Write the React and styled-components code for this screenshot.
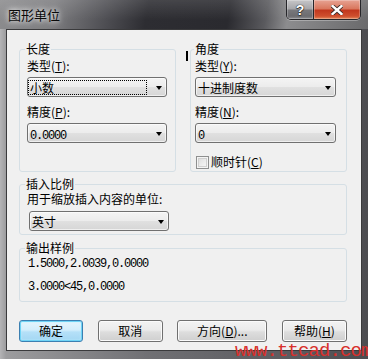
import React from "react";
import styled, { createGlobalStyle } from "styled-components";

const UI = `"Noto Sans CJK SC", "Noto Sans", sans-serif`;
const MONO = `"Liberation Mono", "DejaVu Sans Mono", monospace`;

const GlobalStyle = createGlobalStyle`
  html, body { margin: 0; padding: 0; background: #5a5a5c; }
  body { font-family: ${UI}; }
  *, *::before, *::after { box-sizing: border-box; }
`;

const Window = styled.div`
  position: relative;
  width: 368px;
  height: 359px;
  overflow: hidden;
  display: flex;
  flex-direction: column;
  background: linear-gradient(90deg, #b4b4b6 0px, #9c9c9e 6px, #707074 40%, #58585c 85%, #4c4c50 100%);
  font-family: ${UI};
  font-size: 12px;
  color: #000;
`;

const TitleBar = styled.div`
  height: 29px;
  flex-shrink: 0;
  display: flex;
  align-items: flex-start;
  padding: 0 7px 0 8px;
  background:
    linear-gradient(180deg, rgba(255, 255, 255, 0.12) 0%, rgba(255, 255, 255, 0) 70%),
    linear-gradient(100deg, #8c8c8e 0%, #7c7c7f 15%, #4c4c51 30%, #2d2d32 40%, #2a2a2f 62%, #5a5a5e 72%, #8c8c8e 78%, #6a6a6c 100%);
`;

const Title = styled.div`
  margin-top: 7px;
  font-size: 13px;
  line-height: 15px;
  color: #0a0a0a;
  text-shadow: 0 0 5px rgba(255, 255, 255, 0.95), 0 0 10px rgba(255, 255, 255, 0.7);
`;

const CaptionGroup = styled.div`
  margin-left: auto;
  display: flex;
  height: 20px;
  border: 1px solid #26262a;
  border-top: none;
  border-radius: 0 0 5px 5px;
  overflow: hidden;
  box-shadow: 0 1px 0 rgba(255, 255, 255, 0.3);
`;

const CapButton = styled.div`
  width: ${(p) => p.$w}px;
  display: flex;
  align-items: center;
  justify-content: center;
  border-left: ${(p) => (p.$sep ? "1px solid #26262a" : "none")};
  box-shadow: inset 0 0 0 1px rgba(255, 255, 255, 0.25);
  background: ${(p) =>
    p.$close
      ? "linear-gradient(180deg, #e7a393 0%, #d9785f 45%, #c2381e 55%, #cf4f2e 85%, #e58a5c 100%)"
      : "linear-gradient(180deg, #c6c6c8 0%, #a7a7aa 45%, #77777b 55%, #6c6c70 85%, #8e8e92 100%)"};
`;

const HelpGlyph = styled.span`
  font-family: "Liberation Sans", sans-serif;
  font-weight: bold;
  font-size: 14px;
  line-height: 14px;
  color: #fff;
  text-shadow: 0 0 1px #222, 0 0 1px #222, 0 1px 1px #333;
`;

const Client = styled.div`
  flex: 1;
  margin: 0 6px 8px 6px;
  border: 1px solid #3a3a3c;
  background: #f0f0f0;
  padding: 12px 14px 0 12px;
  display: flex;
  flex-direction: column;
`;

const TopRow = styled.div`
  display: flex;
  align-items: stretch;
`;

const Caret = styled.div`
  flex-shrink: 0;
  align-self: flex-start;
  width: 2px;
  height: 10px;
  margin: 9px 2px 0 10px;
  background: #000;
`;

const Group = styled.fieldset`
  margin: ${(p) => p.$mt || 0}px 0 0 0;
  padding: 0;
  min-width: 0;
  flex: ${(p) => (p.$flex ? 1 : "none")};
  border: 1px solid #d5dfe5;
  border-radius: 3px;
`;

const Legend = styled.legend`
  padding: 0 1px;
  margin-left: ${(p) => p.$x ?? 5}px;
  font-size: 12px;
  line-height: 14px;
`;

const Body = styled.div`
  padding: ${(p) => p.$pad};
  display: flex;
  flex-direction: column;
`;

const Label = styled.div`
  margin-top: ${(p) => p.$mt || 0}px;
  line-height: 14px;
  white-space: nowrap;
`;

const Key = styled.u`
  text-decoration: underline;
  text-underline-offset: 1px;
`;

const Select = styled.div`
  margin-top: ${(p) => p.$mt || 0}px;
  margin-left: ${(p) => p.$ml || 0}px;
  width: ${(p) => (p.$w ? `${p.$w}px` : "auto")};
  height: 20px;
  display: flex;
  align-items: center;
  border: 1px solid #707070;
  border-radius: 3px;
  background: linear-gradient(180deg, #f4f4f4 0%, #ececec 48%, #e0e0e0 52%, #d6d6d6 100%);
  box-shadow: inset 0 0 0 1px rgba(255, 255, 255, 0.6);
`;

const Value = styled.div`
  flex: 1;
  height: 15px;
  line-height: 15px;
  padding-left: 2px;
  outline: ${(p) => (p.$focus ? "1px dotted #000" : "none")};
  outline-offset: -1px;
  white-space: nowrap;
`;

const Arrow = styled.div`
  flex-shrink: 0;
  width: 0;
  height: 0;
  margin: 1px 4px 0 9px;
  border-left: 3.5px solid transparent;
  border-right: 3.5px solid transparent;
  border-top: 4px solid #000;
`;

const Num = styled.span`
  font-family: ${MONO};
  font-size: 12px;
  letter-spacing: -1.2px;
`;

const CheckRow = styled.div`
  margin-top: ${(p) => p.$mt || 0}px;
  display: flex;
  align-items: center;
  line-height: 14px;
  gap: 2px;
`;

const CheckBox = styled.div`
  width: 13px;
  height: 13px;
  margin-left: 1px;
  border: 1px solid #8e8f8f;
  background: linear-gradient(135deg, #d8d8d8 0%, #eeeeee 60%, #f8f8f8 100%);
  box-shadow: inset 0 0 0 1px #f4f4f4, inset 0 0 0 2px #d0d0d0;
`;

const OutLine = styled.div`
  margin-top: ${(p) => p.$mt || 0}px;
  line-height: 14px;
`;

const ButtonRow = styled.div`
  margin-top: 18px;
  display: flex;
  justify-content: space-between;
`;

const Button = styled.div`
  width: ${(p) => p.$w}px;
  height: 22px;
  display: flex;
  align-items: center;
  justify-content: center;
  border-radius: 3px;
  border: 1px solid ${(p) => (p.$default ? "#3c7fb1" : "#707070")};
  background: ${(p) =>
    p.$default
      ? "linear-gradient(180deg, #e6f5fd 0%, #d3eefc 45%, #b5e0f8 55%, #a2d6f3 100%)"
      : "linear-gradient(180deg, #f3f3f3 0%, #ebebeb 45%, #dddddd 55%, #cfcfcf 100%)"};
  box-shadow: ${(p) =>
    p.$default ? "inset 0 0 0 1px #6fd4f6, inset 0 0 2px 1px #bfefff" : "inset 0 0 0 1px #fbfbfb"};
  line-height: 14px;
  white-space: nowrap;
`;

const Watermark = styled.div`
  position: absolute;
  left: 235px;
  top: 342px;
  font-family: ${MONO};
  font-size: 19px;
  line-height: 19px;
  letter-spacing: -0.9px;
  color: #d8302c;
  white-space: nowrap;
`;

export default function App() {
  return (
    <>
      <GlobalStyle />
      <Window>
        <TitleBar>
          <Title>图形单位</Title>
          <CaptionGroup>
            <CapButton $w={26}>
              <HelpGlyph>?</HelpGlyph>
            </CapButton>
            <CapButton $w={47} $sep $close>
              <svg width="12" height="10" viewBox="0 0 12 10">
                <path
                  d="M1.5 1 L10.5 9 M10.5 1 L1.5 9"
                  stroke="#3a2a26"
                  strokeWidth="4.2"
                  strokeLinecap="square"
                  fill="none"
                />
                <path
                  d="M1.5 1 L10.5 9 M10.5 1 L1.5 9"
                  stroke="#ffffff"
                  strokeWidth="2.4"
                  strokeLinecap="square"
                  fill="none"
                />
              </svg>
            </CapButton>
          </CaptionGroup>
        </TitleBar>

        <Client>
          <TopRow>
            <Group $flex>
              <Legend>长度</Legend>
              <Body $pad="0 8px 0 7px">
                <Label $mt={3}>
                  类型(<Key>T</Key>):
                </Label>
                <Select $mt={4}>
                  <Value $focus>小数</Value>
                  <Arrow />
                </Select>
                <Label $mt={8}>
                  精度(<Key>P</Key>):
                </Label>
                <Select $mt={4}>
                  <Value>
                    <Num>0.0000</Num>
                  </Value>
                  <Arrow />
                </Select>
              </Body>
            </Group>
            <Caret />
            <Group $flex>
              <Legend $x={3}>角度</Legend>
              <Body $pad="0 10px 2px 4px">
                <Label $mt={3}>
                  类型(<Key>Y</Key>):
                </Label>
                <Select $mt={4}>
                  <Value>十进制度数</Value>
                  <Arrow />
                </Select>
                <Label $mt={8}>
                  精度(<Key>N</Key>):
                </Label>
                <Select $mt={4}>
                  <Value>
                    <Num>0</Num>
                  </Value>
                  <Arrow />
                </Select>
                <CheckRow $mt={12}>
                  <CheckBox />
                  <span>
                    顺时针(<Key>C</Key>)
                  </span>
                </CheckRow>
              </Body>
            </Group>
          </TopRow>

          <Group $mt={5}>
            <Legend>插入比例</Legend>
            <Body $pad="0 8px 3px 7px">
              <Label $mt={1}>用于缩放插入内容的单位:</Label>
              <Select $mt={5} $ml={2} $w={140}>
                <Value>英寸</Value>
                <Arrow />
              </Select>
            </Body>
          </Group>

          <Group $mt={6}>
            <Legend>输出样例</Legend>
            <Body $pad="0 8px 7px 8px">
              <OutLine>
                <Num>1.5000,2.0039,0.0000</Num>
              </OutLine>
              <OutLine $mt={7}>
                <Num>3.0000&lt;45,0.0000</Num>
              </OutLine>
            </Body>
          </Group>

          <ButtonRow>
            <Button $w={64} $default>
              确定
            </Button>
            <Button $w={65}>取消</Button>
            <Button $w={90}>
              方向(<Key>D</Key>)...
            </Button>
            <Button $w={65}>
              帮助(<Key>H</Key>)
            </Button>
          </ButtonRow>
        </Client>

        <Watermark>www.ttcad.com</Watermark>
      </Window>
    </>
  );
}
